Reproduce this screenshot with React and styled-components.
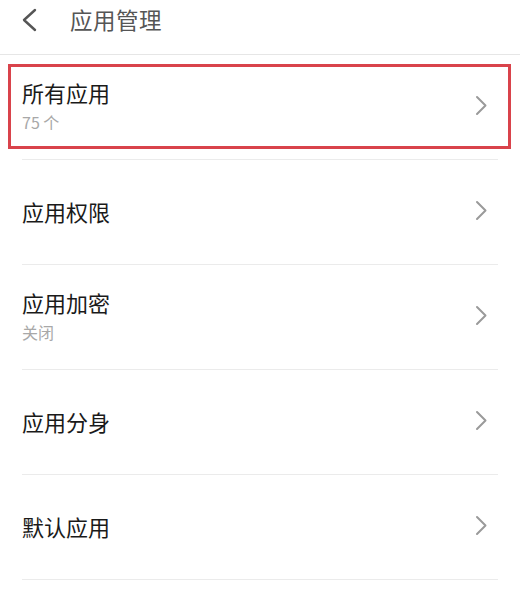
import styled, { createGlobalStyle } from 'styled-components';

const GlobalStyle = createGlobalStyle`
  html, body {
    margin: 0;
    padding: 0;
    background: #ffffff;
  }
  body {
    font-family: 'Noto Sans CJK SC', 'Noto Sans', sans-serif;
  }
`;

const items = [
  { title: '所有应用', sub: '75 个', marked: true },
  { title: '应用权限' },
  { title: '应用加密', sub: '关闭' },
  { title: '应用分身' },
  { title: '默认应用' },
];

function Chevron() {
  return (
    <svg width="13" height="21" viewBox="0 0 13 21">
      <path d="M2 2 L10.5 10.5 L2 19" fill="none" stroke="#9a9a9a" strokeWidth="2" strokeLinecap="round" strokeLinejoin="round" />
    </svg>
  );
}

function BackIcon() {
  return (
    <svg width="20" height="24" viewBox="0 0 20 24">
      <path d="M16 2 L5 12 L16 22" fill="none" stroke="#555" strokeWidth="2.4" strokeLinecap="round" strokeLinejoin="round" />
    </svg>
  );
}

function App() {
  return (
    <StPage>
      <GlobalStyle />
      <StHeader>
        <StBack>
          <BackIcon />
        </StBack>
        <StHeaderTitle>应用管理</StHeaderTitle>
      </StHeader>
      <StList>
        {items.map((item) => (
          <StRow key={item.title}>
            <StTexts>
              <StTitle>{item.title}</StTitle>
              {item.sub && <StSub>{item.sub}</StSub>}
            </StTexts>
            <Chevron />
            {item.marked && <StMark />}
          </StRow>
        ))}
      </StList>
    </StPage>
  );
}

export default App;

const StPage = styled.div`
  width: 520px;
  min-height: 602px;
  background: #fff;
`;

const StHeader = styled.header`
  box-sizing: border-box;
  height: 55px;
  padding: 0 0 16px 19px;
  display: flex;
  align-items: center;
  border-bottom: 1px solid #e6e6e6;
`;

const StBack = styled.div`
  display: flex;
  align-items: center;
  width: 51px;
  margin-top: 2px;
`;

const StHeaderTitle = styled.h1`
  margin: 0;
  font-size: 22.5px;
  font-weight: 400;
  color: #555;
  letter-spacing: 0.5px;
`;

const StList = styled.div`
  display: flex;
  flex-direction: column;
`;

const StRow = styled.div`
  position: relative;
  box-sizing: border-box;
  height: 105px;
  margin: 0 22px;
  padding: 0 10px 3px 0;
  display: flex;
  align-items: center;
  justify-content: space-between;
  border-bottom: 1px solid #ebebeb;
`;

const StTexts = styled.div`
  display: flex;
  flex-direction: column;
`;

const StTitle = styled.span`
  font-size: 22px;
  line-height: 28px;
  color: #1a1a1a;
`;

const StSub = styled.span`
  margin-top: 5px;
  font-size: 16px;
  line-height: 22px;
  color: #a8a8a8;
`;

const StMark = styled.div`
  position: absolute;
  top: 9px;
  left: -14px;
  right: -13px;
  height: 85px;
  box-sizing: border-box;
  border: 3px solid #d9434b;
  pointer-events: none;
`;
